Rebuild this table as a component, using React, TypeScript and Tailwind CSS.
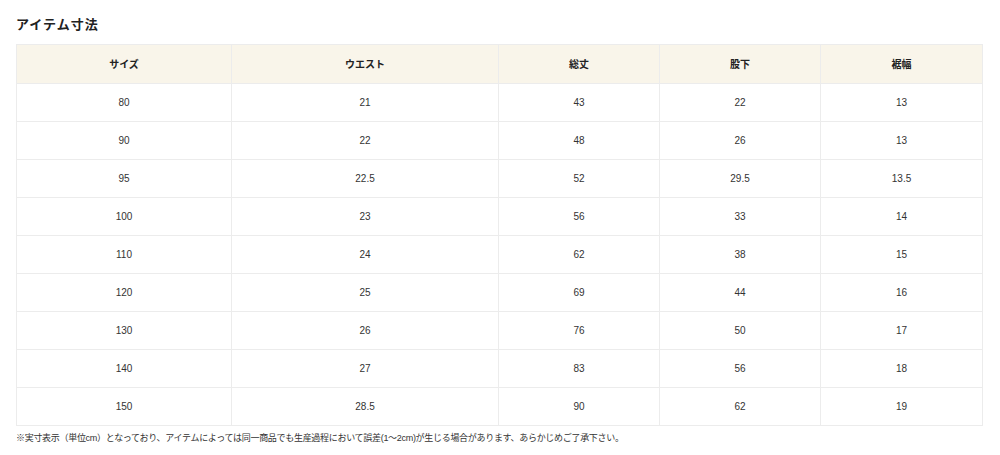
import React from 'react';

const HEADERS = ['サイズ', 'ウエスト', '総丈', '股下', '裾幅'];

const ROWS = [
  ['80', '21', '43', '22', '13'],
  ['90', '22', '48', '26', '13'],
  ['95', '22.5', '52', '29.5', '13.5'],
  ['100', '23', '56', '33', '14'],
  ['110', '24', '62', '38', '15'],
  ['120', '25', '69', '44', '16'],
  ['130', '26', '76', '50', '17'],
  ['140', '27', '83', '56', '18'],
  ['150', '28.5', '90', '62', '19'],
];

const COL_WIDTHS = ['w-[215px]', 'w-[267px]', 'w-[161px]', 'w-[161px]', 'w-[162px]'];

export default function App() {
  return (
    <div
      className="w-[1000px] h-[455px] bg-white px-4 pt-[16px] text-[#333]"
      style={{ fontFamily: '"Liberation Sans", "Noto Sans CJK JP", sans-serif' }}
    >
      <h2 className="text-[13px] font-bold tracking-[1px] text-[#222] leading-none h-[28px] pt-[2px]">
        アイテム寸法
      </h2>

      <table className="w-[966px] border-collapse table-fixed text-[10px]">
        <thead>
          <tr className="bg-[#f9f5ea]">
            {HEADERS.map((h, i) => (
              <th
                key={h}
                className={`${COL_WIDTHS[i]} h-[39px] border border-[#ececec] font-bold text-[#222] text-center`}
              >
                {h}
              </th>
            ))}
          </tr>
        </thead>
        <tbody>
          {ROWS.map((row) => (
            <tr key={row[0]}>
              {row.map((cell, i) => (
                <td key={i} className="h-[38px] border border-[#ececec] text-center text-[#333]">
                  {cell}
                </td>
              ))}
            </tr>
          ))}
        </tbody>
      </table>

      <p className="mt-[8px] text-[9px] tracking-[-0.3px] text-[#333] leading-none">
        ※実寸表示（単位cm）となっており、アイテムによっては同一商品でも生産過程において誤差(1～2cm)が生じる場合があります、あらかじめご了承下さい。
      </p>
    </div>
  );
}
